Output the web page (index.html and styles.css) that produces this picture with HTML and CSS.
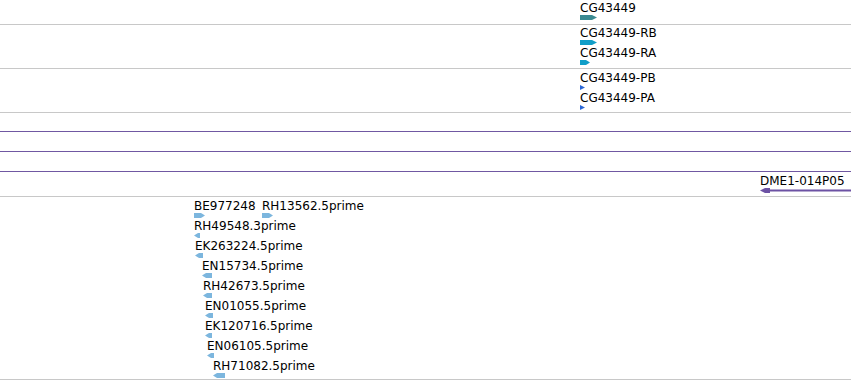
FILE: index.html
```html
<!DOCTYPE html>
<html lang="en">

<head>
    <meta charset="UTF-8">
    <meta name="viewport" content="width=device-width, initial-scale=1.0">
    <title>Tracks</title>
    <link rel="stylesheet" href="styles.css">
</head>

<body>
    <div id="tracks">
        <!-- gene track -->
        <div class="track gene" style="height: 24px;">
            <div class="feature" style="left: 580px; top: 1px;">
                <span class="label">CG43449</span>
                <svg class="glyph" width="17" height="5"><polygon class="teal" points="0,0 12,0 17,2.5 12,5 0,5" /></svg>
            </div>
        </div>

        <!-- transcripts -->
        <div class="track" style="height: 43px;">
            <div class="feature" style="left: 580px; top: 1px;">
                <span class="label">CG43449-RB</span>
                <svg class="glyph" width="17" height="5"><polygon class="cyan" points="0,0 12,0 17,2.5 12,5 0,5" /></svg>
            </div>
            <div class="feature" style="left: 580px; top: 21px;">
                <span class="label">CG43449-RA</span>
                <svg class="glyph" width="10" height="5"><polygon class="cyan" points="0,0 6,0 10,2.5 6,5 0,5" /></svg>
            </div>
        </div>

        <!-- proteins -->
        <div class="track" style="height: 43px;">
            <div class="feature" style="left: 580px; top: 2px;">
                <span class="label">CG43449-PB</span>
                <svg class="glyph" width="5" height="5"><polygon class="blue" points="0,0 5,2.5 0,5" /></svg>
            </div>
            <div class="feature" style="left: 580px; top: 22px;">
                <span class="label">CG43449-PA</span>
                <svg class="glyph" width="5" height="5"><polygon class="blue" points="0,0 5,2.5 0,5" /></svg>
            </div>
        </div>

        <div class="track purple" style="height: 18px;"></div>
        <div class="track purple" style="height: 19px;"></div>
        <div class="track purple" style="height: 19px;"></div>

        <!-- clones -->
        <div class="track" style="height: 24px;">
            <div class="feature" style="left: 760px; top: 2px;">
                <span class="label">DME1-014P05</span>
                <svg class="glyph" width="91" height="5">
                    <line class="clone-line" x1="4" y1="2.5" x2="91" y2="2.5" />
                    <polygon class="clone" points="0,2.5 5,0 10,0 10,5 5,5" />
                </svg>
            </div>
        </div>

        <!-- ESTs -->
        <div class="track" style="height: 182px;">
            <div class="feature" style="left: 194px; top: 2px;">
                <span class="label">BE977248</span>
                <svg class="glyph" width="11" height="5"><polygon class="est" points="0,0 7,0 11,2.5 7,5 0,5" /></svg>
            </div>
            <div class="feature" style="left: 262px; top: 2px;">
                <span class="label">RH13562.5prime</span>
                <svg class="glyph" width="11" height="5"><polygon class="est" points="0,0 7,0 11,2.5 7,5 0,5" /></svg>
            </div>
            <div class="feature" style="left: 194px; top: 22px;">
                <span class="label">RH49548.3prime</span>
                <svg class="glyph" width="6" height="5"><polygon class="est" points="0,2.5 4,0 6,0 6,5 4,5" /></svg>
            </div>
            <div class="feature" style="left: 195px; top: 42px;">
                <span class="label">EK263224.5prime</span>
                <svg class="glyph" width="8" height="5"><polygon class="est" points="0,2.5 4,0 8,0 8,5 4,5" /></svg>
            </div>
            <div class="feature" style="left: 202px; top: 62px;">
                <span class="label">EN15734.5prime</span>
                <svg class="glyph" width="10" height="5"><polygon class="est" points="0,2.5 4,0 10,0 10,5 4,5" /></svg>
            </div>
            <div class="feature" style="left: 203px; top: 82px;">
                <span class="label">RH42673.5prime</span>
                <svg class="glyph" width="9" height="5"><polygon class="est" points="0,2.5 4,0 9,0 9,5 4,5" /></svg>
            </div>
            <div class="feature" style="left: 205px; top: 102px;">
                <span class="label">EN01055.5prime</span>
                <svg class="glyph" width="8" height="5"><polygon class="est" points="0,2.5 4,0 8,0 8,5 4,5" /></svg>
            </div>
            <div class="feature" style="left: 205px; top: 122px;">
                <span class="label">EK120716.5prime</span>
                <svg class="glyph" width="7" height="5"><polygon class="est" points="0,2.5 4,0 7,0 7,5 4,5" /></svg>
            </div>
            <div class="feature" style="left: 207px; top: 142px;">
                <span class="label">EN06105.5prime</span>
                <svg class="glyph" width="7" height="5"><polygon class="est" points="0,2.5 4,0 7,0 7,5 4,5" /></svg>
            </div>
            <div class="feature" style="left: 213px; top: 162px;">
                <span class="label">RH71082.5prime</span>
                <svg class="glyph" width="12" height="5"><polygon class="est" points="0,2.5 4,0 12,0 12,5 4,5" /></svg>
            </div>
        </div>
    </div>
</body>

</html>
```

FILE: styles.css
```css
body {
    margin: 0;
    background-color: #fff;
    font-family: "DejaVu Sans", sans-serif;
    font-size: 12px;
    color: #000;
    overflow: hidden;
}

#tracks {
    width: 851px;
}

.track {
    position: relative;
    border-bottom: 1px solid rgb(200, 200, 200);
}

.track.purple {
    border-bottom-color: rgb(112, 88, 162);
}

.feature {
    position: absolute;
    white-space: nowrap;
}

.label {
    display: block;
    line-height: 14px;
}

.glyph {
    display: block;
    overflow: visible;
}

.teal {
    fill: rgb(58, 138, 146);
}

.cyan {
    fill: rgb(16, 158, 200);
}

.blue {
    fill: rgb(44, 104, 214);
}

.est {
    fill: rgb(124, 182, 222);
}

.clone {
    fill: rgb(108, 82, 164);
}

.clone-line {
    stroke: rgb(108, 82, 164);
    stroke-width: 2;
}
```
